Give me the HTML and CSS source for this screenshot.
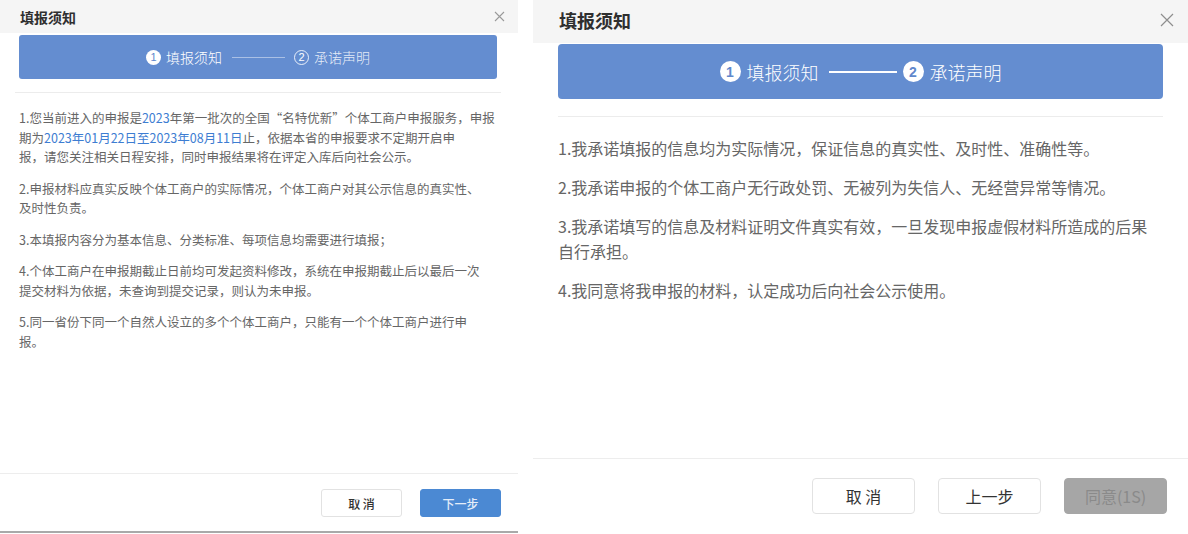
FILE: index.html
```html
<!DOCTYPE html>
<html lang="zh-CN">
<head>
<meta charset="utf-8">
<title>填报须知</title>
<link rel="stylesheet" href="styles.css">
</head>
<body>
<div class="stage">
  <section class="dlg dlg-sm">
    <header class="dlg-head">
      <h2 class="dlg-title">填报须知</h2>
      <span class="close"><svg width="11" height="11" viewBox="0 0 11 11"><path d="M1 1L10 10M10 1L1 10" stroke="#9a9a9a" stroke-width="1.1" fill="none"/></svg></span>
    </header>
    <div class="dlg-body">
      <div class="steps">
        <span class="step"><i class="num fill">1</i>填报须知</span>
        <span class="step-line"></span>
        <span class="step dim"><i class="num outline">2</i>承诺声明</span>
      </div>
      <div class="sep"></div>
      <div class="notice">
        <p>1.您当前进入的申报是<span class="hl">2023</span>年第一批次的全国“名特优新”个体工商户申报服务，申报<br>期为<span class="hl">2023年01月22日至2023年08月11日</span>止，依据本省的申报要求不定期开启申<br>报，请您关注相关日程安排，同时申报结果将在评定入库后向社会公示。</p>
        <p>2.申报材料应真实反映个体工商户的实际情况，个体工商户对其公示信息的真实性、<br>及时性负责。</p>
        <p>3.本填报内容分为基本信息、分类标准、每项信息均需要进行填报；</p>
        <p>4.个体工商户在申报期截止日前均可发起资料修改，系统在申报期截止后以最后一次<br>提交材料为依据，未查询到提交记录，则认为未申报。</p>
        <p>5.同一省份下同一个自然人设立的多个个体工商户，只能有一个个体工商户进行申<br>报。</p>
      </div>
    </div>
    <footer class="dlg-foot">
      <button class="btn">取 消</button>
      <button class="btn primary">下一步</button>
    </footer>
  </section>

  <section class="dlg dlg-lg">
    <header class="dlg-head">
      <h2 class="dlg-title">填报须知</h2>
      <span class="close"><svg width="14" height="14" viewBox="0 0 14 14"><path d="M1 1L13 13M13 1L1 13" stroke="#8e8e8e" stroke-width="1.2" fill="none"/></svg></span>
    </header>
    <div class="dlg-body">
      <div class="steps">
        <span class="step"><i class="num fill">1</i>填报须知</span>
        <span class="step-line"></span>
        <span class="step"><i class="num fill">2</i>承诺声明</span>
      </div>
      <div class="sep"></div>
      <div class="notice">
        <p>1.我承诺填报的信息均为实际情况，保证信息的真实性、及时性、准确性等。</p>
        <p>2.我承诺申报的个体工商户无行政处罚、无被列为失信人、无经营异常等情况。</p>
        <p>3.我承诺填写的信息及材料证明文件真实有效，一旦发现申报虚假材料所造成的后果<br>自行承担。</p>
        <p>4.我同意将我申报的材料，认定成功后向社会公示使用。</p>
      </div>
    </div>
    <footer class="dlg-foot">
      <button class="btn">取 消</button>
      <button class="btn">上一步</button>
      <button class="btn disabled">同意(1S)</button>
    </footer>
  </section>
</div>
</body>
</html>
```

FILE: styles.css
```css
* { box-sizing: border-box; }
html, body { margin: 0; padding: 0; background: #fff; }
body {
  font-family: "Noto Sans CJK SC", "Noto Sans", sans-serif;
  color: #333;
}
.stage {
  display: flex;
  gap: 15px;
  height: 534px;
  overflow: hidden;
}
.dlg {
  display: flex;
  flex-direction: column;
  background: #fff;
}
.dlg-head {
  display: flex;
  align-items: center;
  justify-content: space-between;
  background: #f5f5f5;
}
.dlg-title {
  margin: 0;
  font-weight: 700;
  color: #2f2f2f;
}
.close { display: flex; }
.dlg-body {
  flex: 1;
  display: flex;
  flex-direction: column;
}
.steps {
  display: flex;
  align-items: center;
  justify-content: center;
  background: #648dd0;
  color: #fff;
}
.step {
  display: flex;
  align-items: center;
  white-space: nowrap;
  font-weight: 300;
}
.step.dim { color: rgba(255, 255, 255, 0.85); }
.num {
  font-style: normal;
  display: flex;
  align-items: center;
  justify-content: center;
  border-radius: 50%;
  font-family: "Liberation Sans", sans-serif;
}
.num.fill { background: #fff; color: #5f88cc; }
.num.outline { border: 1px solid rgba(255, 255, 255, 0.85); color: #fff; }
.step-line { display: block; }
.sep { border-top: 1px solid #ececec; }
.notice { color: #666; white-space: nowrap; }
.notice p { margin: 0; }
.hl { color: #3d7dd2; }
.dlg-foot {
  display: flex;
  justify-content: flex-end;
  align-items: flex-start;
  border-top: 1px solid #ededed;
}
.btn {
  font-family: "Noto Sans CJK SC", "Noto Sans", sans-serif;
  background: #fff;
  border: 1px solid #e2e2e2;
  color: #333;
  padding: 0;
  cursor: pointer;
}
.btn.primary { background: #4b89d3; border-color: #4b89d3; color: #e4edf9; }
.btn.disabled { background: #a6a6a6; border-color: #a6a6a6; color: #8a8a8a; }

/* small dialog */
.dlg-sm {
  width: 518px;
  height: 533px;
  border-bottom: 2px solid #a9a9a9;
}
.dlg-sm .dlg-head { height: 33px; padding: 0 13px 0 20px; }
.dlg-sm .dlg-title { font-size: 14px; }
.dlg-sm .dlg-body { padding: 2px 21px 0 19px; }
.dlg-sm .steps { height: 44px; border-radius: 3px; font-size: 14px; }
.dlg-sm .num { width: 15px; height: 15px; font-size: 11px; margin-right: 5px; }
.dlg-sm .step-line { width: 53px; margin: 0 9px 0 10px; border-top: 1px solid rgba(255, 255, 255, 0.45); }
.dlg-sm .sep { margin: 13px -4px 0; }
.dlg-sm .notice { padding-top: 15px; font-size: 12.5px; line-height: 19.5px; }
.dlg-sm .notice p { margin-bottom: 12px; }
.dlg-sm .dlg-foot { height: 58px; padding: 15px 17px 0; gap: 18px; }
.dlg-sm .btn { width: 81px; height: 28px; border-radius: 3px; font-size: 12px; font-weight: 500; }

/* large dialog */
.dlg-lg {
  flex: 1;
  height: 534px;
}
.dlg-lg .dlg-head { height: 43px; padding: 0 14px 3px 26px; }
.dlg-lg .dlg-title { font-size: 18px; }
.dlg-lg .dlg-body { padding: 1px 25px 0; }
.dlg-lg .steps { height: 55px; border-radius: 4px; font-size: 18px; }
.dlg-lg .num { width: 21px; height: 21px; font-size: 14px; font-weight: 700; margin-right: 6px; }
.dlg-lg .step-line { width: 68px; margin: 0 6px 0 10px; border-top: 2px solid #fff; }
.dlg-lg .sep { margin-top: 17px; }
.dlg-lg .notice { padding-top: 19px; font-size: 16px; line-height: 25px; }
.dlg-lg .notice p { margin-bottom: 14px; }
.dlg-lg .dlg-foot { height: 76px; padding: 19px 21px 0; gap: 23px; }
.dlg-lg .btn { width: 103px; height: 36px; border-radius: 4px; font-size: 16px; }
```
